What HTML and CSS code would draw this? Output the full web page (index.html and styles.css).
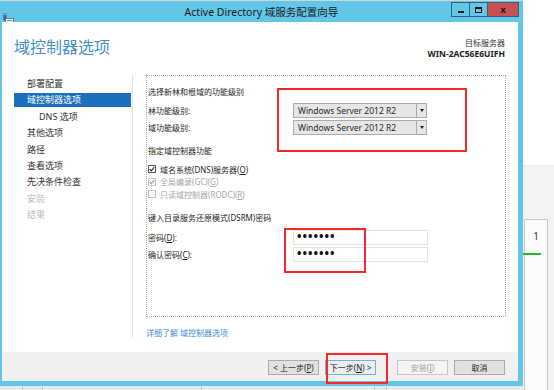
FILE: index.html
```html
<!DOCTYPE html>
<html lang="zh-CN">

<head>
	<meta charset="UTF-8">
	<title>Active Directory 域服务配置向导</title>
	<link rel="stylesheet" href="styles.css">
</head>

<body>
	<div class="desktop">
		<div class="leftCol">
			<div class="topStrip"></div>
			<div class="window">
				<div class="titleBar">
					<div class="appIcon">
						<svg width="11" height="12" viewBox="0 0 11 12">
							<rect x="0.5" y="0.5" width="3" height="7" fill="#2f5f9e" />
							<rect x="1" y="1" width="2" height="1" fill="#9cc3ea" />
							<rect x="2.5" y="5.5" width="8" height="6" fill="#e9edf1" stroke="#6a7a8a" />
							<rect x="4" y="7" width="5" height="1" fill="#7d8fa3" />
							<rect x="4" y="9" width="5" height="1" fill="#7d8fa3" />
						</svg>
					</div>
					<div class="title">Active Directory 域服务配置向导</div>
					<div class="controls">
						<span class="ctl min"><i></i></span>
						<span class="ctl max"><i></i></span>
						<span class="ctl close">x</span>
					</div>
				</div>

				<div class="client">
					<header class="pageHeader">
						<h1>域控制器选项</h1>
						<div class="target">
							<div>目标服务器</div>
							<div class="serverName">WIN-2AC56E6UIFH</div>
						</div>
					</header>

					<div class="main">
						<ul class="nav">
							<li>部署配置</li>
							<li class="active">域控制器选项</li>
							<li class="sub">DNS 选项</li>
							<li>其他选项</li>
							<li>路径</li>
							<li>查看选项</li>
							<li>先决条件检查</li>
							<li class="disabled">安装</li>
							<li class="disabled">结果</li>
						</ul>

						<div class="content">
							<section class="panel">
								<p class="groupTitle first">选择新林和根域的功能级别</p>
								<div class="fieldRow">
									<span class="label">林功能级别:</span>
									<div class="select"><span>Windows Server 2012 R2</span><b></b></div>
								</div>
								<div class="fieldRow tight">
									<span class="label">域功能级别:</span>
									<div class="select"><span>Windows Server 2012 R2</span><b></b></div>
								</div>

								<p class="groupTitle">指定域控制器功能</p>
								<div class="checks">
									<div class="check">
										<svg width="8" height="8" viewBox="0 0 8 8">
											<rect x="0.5" y="0.5" width="7" height="7" fill="#fff" stroke="#555" />
											<path d="M1.8 4.2 L3.3 5.8 L6.3 2" fill="none" stroke="#222" stroke-width="1.1" />
										</svg>
										<span>域名系统(DNS)服务器(<u>O</u>)</span>
									</div>
									<div class="check off">
										<svg width="8" height="8" viewBox="0 0 8 8">
											<rect x="0.5" y="0.5" width="7" height="7" fill="#fff" stroke="#c4c4c4" />
											<path d="M1.8 4.2 L3.3 5.8 L6.3 2" fill="none" stroke="#9a9a9a" stroke-width="1.1" />
										</svg>
										<span>全局编录(GC)(<u>G</u>)</span>
									</div>
									<div class="check off">
										<svg width="8" height="8" viewBox="0 0 8 8">
											<rect x="0.5" y="0.5" width="7" height="7" fill="#fff" stroke="#c4c4c4" />
										</svg>
										<span>只读域控制器(RODC)(<u>R</u>)</span>
									</div>
								</div>

								<p class="groupTitle dsrm">键入目录服务还原模式(DSRM)密码</p>
								<div class="fieldRow pw">
									<span class="label">密码(<u>D</u>):</span>
									<div class="password">•••••••</div>
								</div>
								<div class="fieldRow tight">
									<span class="label">确认密码(<u>C</u>):</span>
									<div class="password">•••••••</div>
								</div>
							</section>
							<a class="more">详细了解 域控制器选项</a>
						</div>
					</div>

					<footer class="buttons">
						<span class="btn">&lt; 上一步(<u>P</u>)</span>
						<span class="btn next">下一步(<u>N</u>) &gt;</span>
						<span class="btn install">安装(<u>I</u>)</span>
						<span class="btn">取消</span>
					</footer>
				</div>
			</div>
			<div class="taskStrip">
				<span style="width:23px"></span>
				<span style="width:20px"></span>
				<span style="width:159px"></span>
				<span style="width:173px"></span>
				<span style="width:12px"></span>
			</div>
		</div>

		<div class="sideCol">
			<div class="sideTop"></div>
			<div class="sideRest">
				<div class="tile">
					<span class="num">1</span>
					<i class="bar"></i>
				</div>
			</div>
		</div>

		<div class="mark markLevels"></div>
		<div class="mark markPassword"></div>
		<div class="mark markNext"></div>
	</div>
</body>

</html>
```

FILE: styles.css
```css
* {
	margin: 0;
	padding: 0;
	box-sizing: border-box;
}

body {
	width: 554px;
	height: 390px;
	overflow: hidden;
	background-color: #f3f3f3;
	font-family: "Noto Sans", "Noto Sans CJK SC", sans-serif;
	color: #1e1e1e;
}

.desktop {
	position: relative;
	display: flex;
	height: 390px;
}

.leftCol {
	width: 523px;
	display: flex;
	flex-direction: column;
}

.topStrip {
	height: 1px;
	background-color: #d4d4d4;
}

.window {
	height: 385px;
	background-color: #62c6e8;
	display: flex;
	flex-direction: column;
}

/* title bar */

.titleBar {
	height: 21px;
	display: grid;
	grid-template-columns: 1fr auto 1fr;
	align-items: start;
}

.appIcon {
	padding: 7px 0 0 3px;
	height: 21px;
}

.title {
	align-self: center;
	font-size: 10.5px;
	line-height: 12px;
	color: #1a1a1a;
	white-space: nowrap;
}

.controls {
	justify-self: end;
	display: flex;
	margin: 1px 4px 0 0;
}

.ctl {
	height: 15px;
	border: 1px solid #2f6478;
	display: flex;
	align-items: center;
	justify-content: center;
}

.ctl.min {
	width: 19px;
}

.ctl.min i {
	width: 6px;
	height: 2px;
	margin-top: 4px;
	background-color: #111;
}

.ctl.max {
	width: 18px;
	border-left: 0;
}

.ctl.max i {
	width: 7px;
	height: 6px;
	border: 1px solid #111;
	border-top-width: 2px;
}

.ctl.close {
	width: 31px;
	border-left: 0;
	background-color: #c75050;
	font-size: 9px;
	font-weight: bold;
	line-height: 12px;
	color: #1a1a1a;
}

/* client area */

.client {
	flex: 1;
	margin: 0 5px 5px 2px;
	background-color: #fff;
	display: flex;
	flex-direction: column;
}

.pageHeader {
	height: 53px;
	display: flex;
	justify-content: space-between;
	align-items: flex-start;
	padding: 15px 13px 0 12px;
}

.pageHeader h1 {
	font-size: 16px;
	font-weight: normal;
	line-height: 20px;
	color: #4391c6;
}

.target {
	text-align: right;
	font-size: 8px;
	line-height: 11px;
	color: #333;
}

.serverName {
	font-size: 8.5px;
	font-weight: bold;
	color: #222;
}

.main {
	height: 277px;
	display: flex;
}

.nav {
	list-style: none;
	width: 119px;
	height: 263px;
	margin-left: 12px;
	padding-top: 2px;
	border-right: 1px solid #e2e2e2;
	font-size: 9px;
}

.nav li {
	height: 14px;
	line-height: 14px;
	margin: 0 1px 2.4px 0;
	padding-left: 13px;
	color: #333;
}

.nav li.active {
	background-color: #1b6fbd;
	color: #fff;
}

.nav li.sub {
	padding-left: 25px;
}

.nav li.disabled {
	color: #bdbdbd;
}

.content {
	margin-left: 13px;
	width: 360px;
}

.panel {
	height: 242px;
	border: 1px dotted #a8a8a8;
	padding: 0 1px;
	font-size: 8px;
}

.groupTitle {
	line-height: 12px;
	margin-top: 10px;
}

.groupTitle.dsrm {
	margin-top: 11.5px;
}

.fieldRow {
	display: flex;
	align-items: center;
	height: 15px;
	margin-top: 5px;
}

.fieldRow.tight {
	margin-top: 2px;
}

.fieldRow.pw {
	margin-top: 6px;
}

.label {
	width: 145px;
}

.select {
	width: 134px;
	height: 15px;
	display: flex;
	border: 1px solid #acacac;
	background-color: #e6e6e6;
	font-size: 8.5px;
	line-height: 13px;
	color: #2a2a2a;
}

.select span {
	flex: 1;
	padding-left: 4px;
	white-space: nowrap;
}

.select b {
	width: 10px;
	border-left: 1px solid #acacac;
	display: flex;
	align-items: center;
	justify-content: center;
}

.select b::after {
	content: "";
	border-left: 2px solid transparent;
	border-right: 2px solid transparent;
	border-top: 3px solid #222;
}

.checks {
	margin-top: 6px;
}

.check {
	height: 12.5px;
	display: flex;
	align-items: center;
	gap: 4px;
}

.check svg {
	flex-shrink: 0;
}

.check.off {
	color: #a6a6a6;
}

.password {
	width: 135px;
	height: 15px;
	border: 1px solid #e4e4e4;
	padding-left: 3px;
	font-size: 12px;
	font-weight: bold;
	line-height: 12px;
	letter-spacing: 1px;
	color: #111;
}

.more {
	display: block;
	margin-top: 10px;
	font-size: 8px;
	line-height: 12px;
	color: #3b8dd3;
}

/* footer buttons */

.buttons {
	height: 29px;
	background-color: #f0f0f0;
	display: flex;
	justify-content: flex-end;
	gap: 6px;
	padding: 8px 13px 0 0;
}

.btn {
	width: 51px;
	height: 15px;
	border: 1px solid #acacac;
	background-color: #e1e1e1;
	font-size: 8px;
	line-height: 13px;
	text-align: center;
	color: #222;
	white-space: nowrap;
}

.btn.next {
	border-color: #74aee6;
	background-color: #e9eef3;
}

.btn.install {
	margin-left: 15px;
	border-color: #c6c6c6;
	background-color: #f4f4f4;
	color: #a3a3a3;
}

.taskStrip {
	height: 4px;
	display: flex;
	background-color: #e8e8e8;
}

.taskStrip span {
	border-right: 1px solid #c4c4c4;
}

/* right side */

.sideCol {
	flex: 1;
	display: flex;
	flex-direction: column;
}

.sideTop {
	height: 166px;
	background-color: #fff;
	border-bottom: 1px solid #ececec;
}

.sideRest {
	flex: 1;
	padding-top: 53px;
}

.tile {
	height: 100%;
	width: 24px;
	margin-left: 1px;
	border: 1px solid #c6c6c6;
	border-bottom: 0;
	background-color: #fbfbfb;
	text-align: center;
}

.tile .num {
	display: block;
	margin-top: 10px;
	font-size: 10px;
	line-height: 12px;
	color: #333;
}

.tile .bar {
	display: block;
	width: 18px;
	height: 2px;
	margin: 11px 0 0 -2px;
	background-color: #2eb82e;
}

/* red annotations */

.mark {
	position: absolute;
	border: 2px solid #f42a2a;
}

.markLevels {
	left: 277px;
	top: 88px;
	width: 190px;
	height: 64px;
}

.markPassword {
	left: 284px;
	top: 228px;
	width: 82px;
	height: 45px;
}

.markNext {
	left: 326px;
	top: 353px;
	width: 62px;
	height: 31px;
}
```
